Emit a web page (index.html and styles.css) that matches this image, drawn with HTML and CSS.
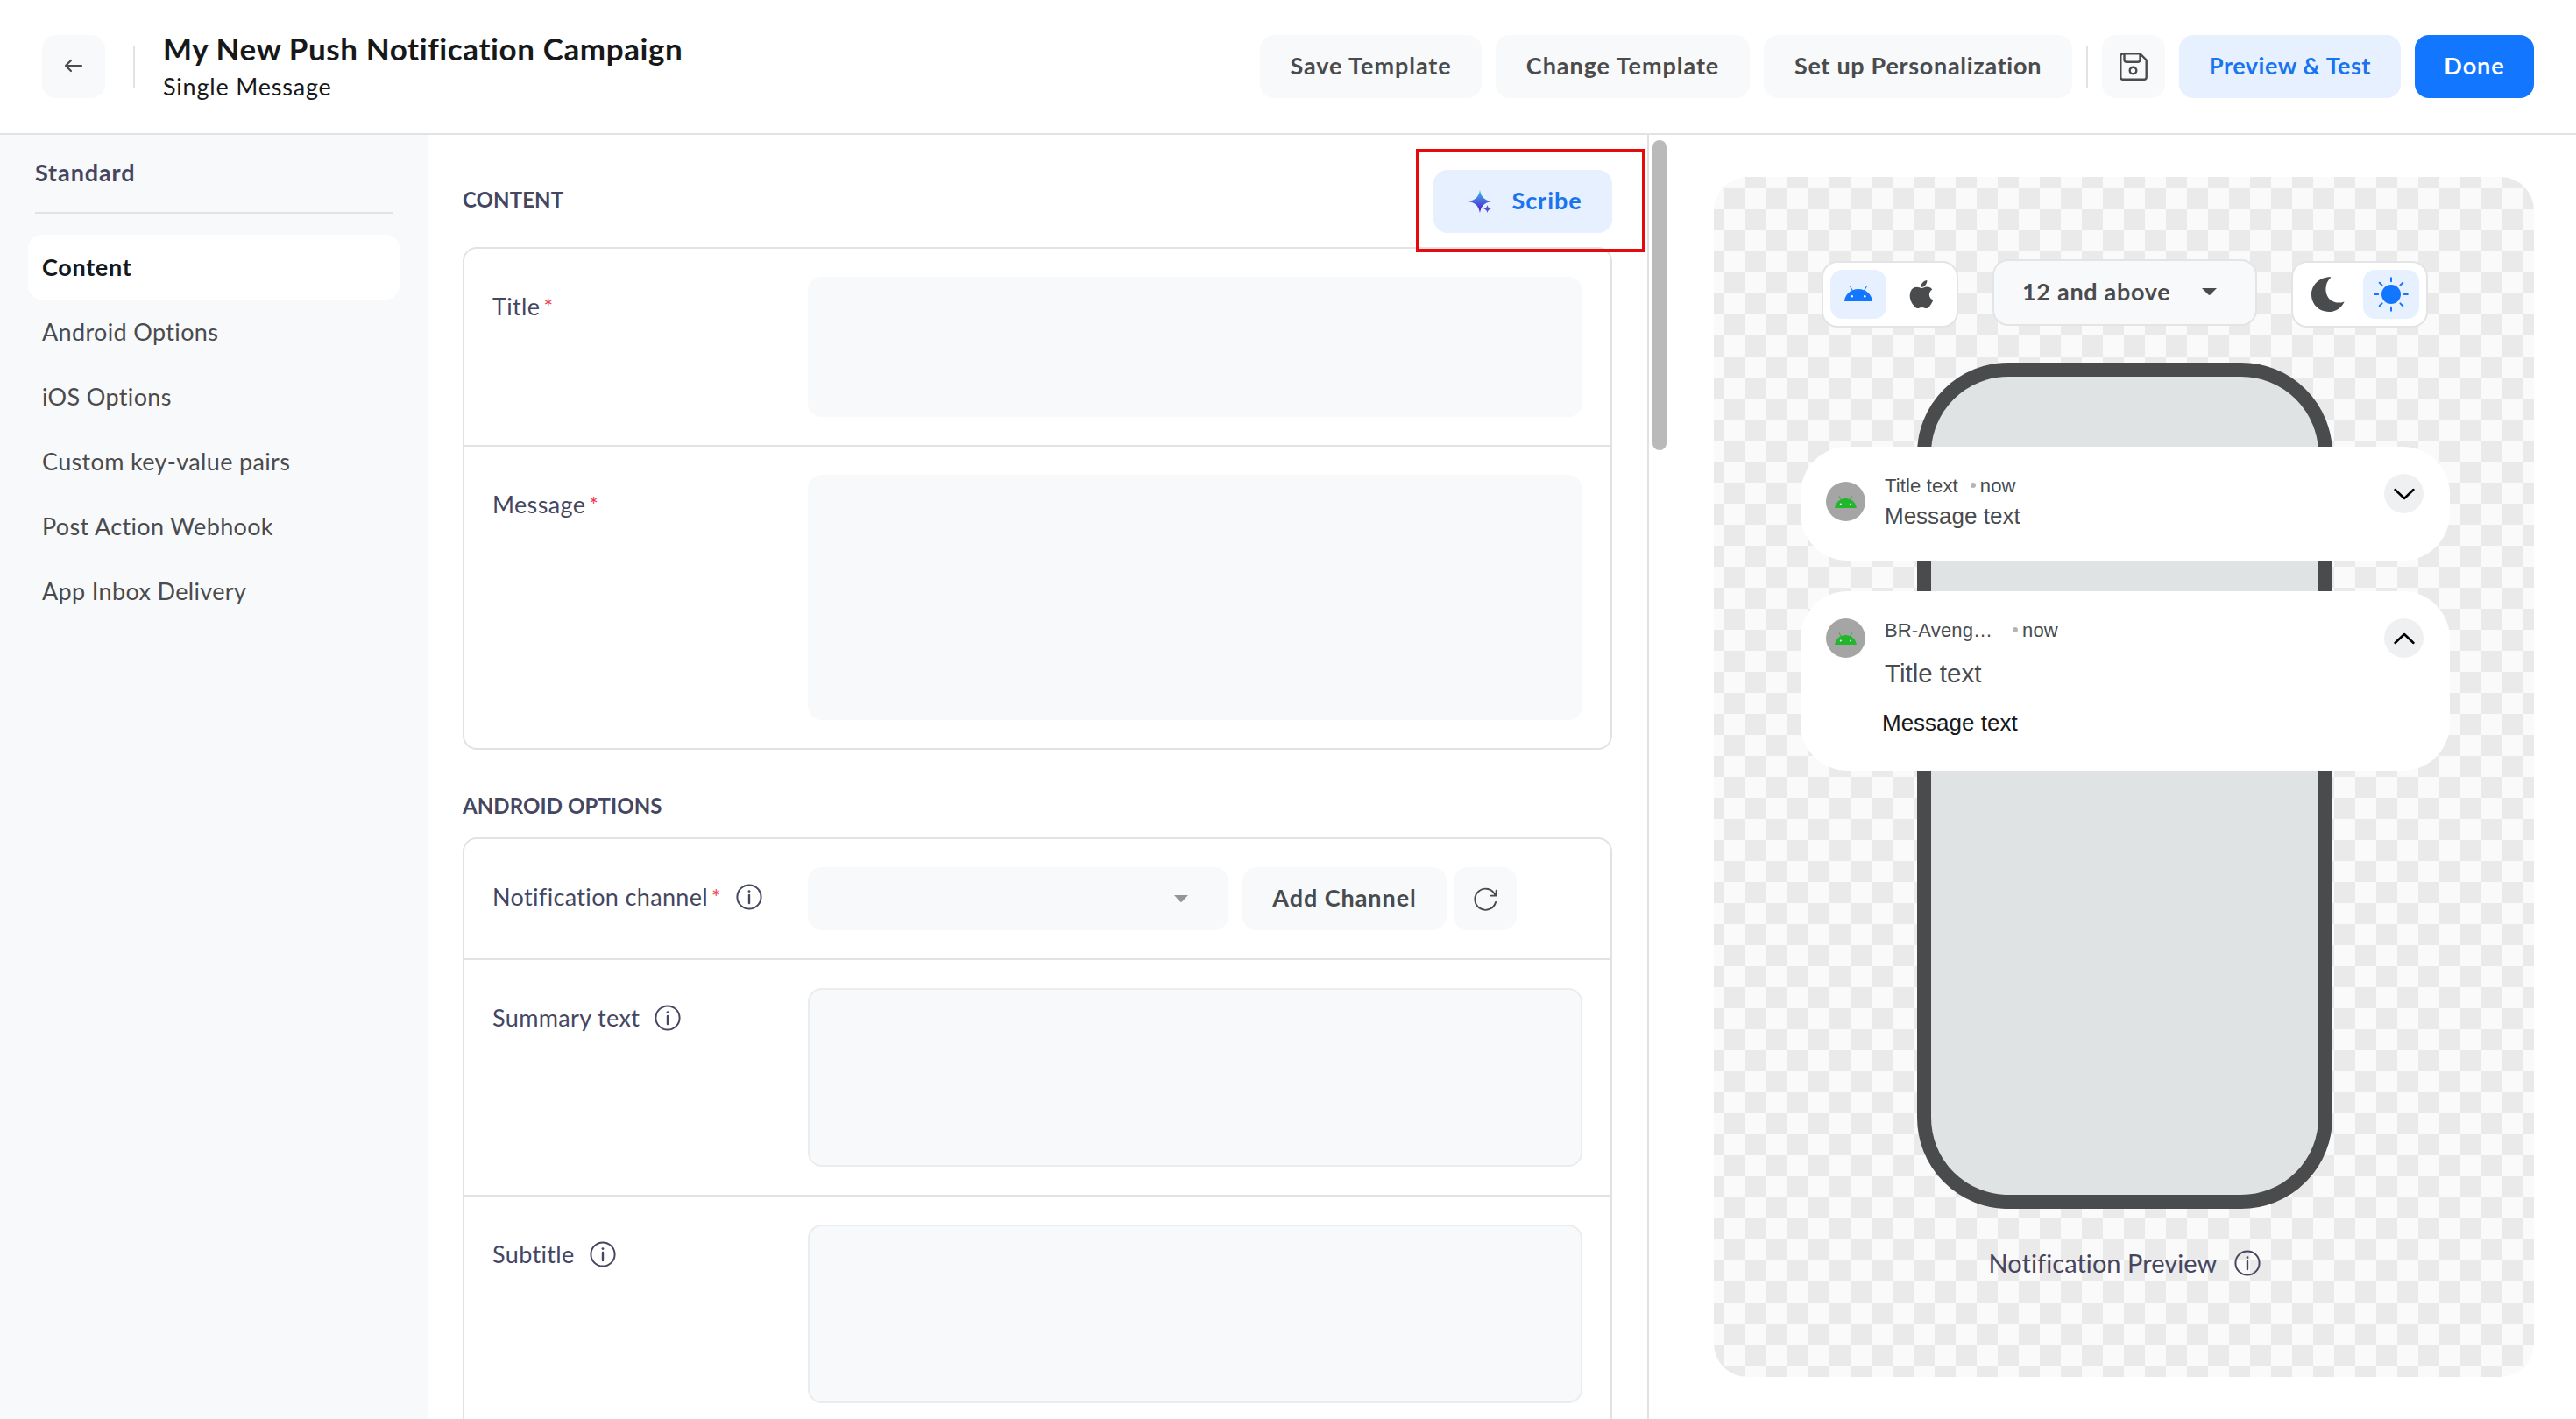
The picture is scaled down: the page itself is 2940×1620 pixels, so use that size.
FILE: index.html
```html
<!DOCTYPE html>
<html lang="en">

<head>
    <meta charset="UTF-8">
    <meta name="viewport" content="width=device-width, initial-scale=1.0">
    <title>My New Push Notification Campaign</title>
    <link rel="stylesheet" href="styles.css">
</head>

<body>
    <!-- shared icons -->
    <svg class="icon-defs" width="0" height="0">
        <symbol id="info" viewBox="0 0 30 30">
            <circle cx="15" cy="15" r="13.6" fill="none" stroke="currentColor" stroke-width="2" />
            <circle cx="15" cy="8.6" r="1.4" fill="currentColor" />
            <path d="M15 13v9" stroke="currentColor" stroke-width="2.4" stroke-linecap="round" />
        </symbol>
        <symbol id="android" viewBox="0 0 32 18">
            <path d="M0 18C0.6 12.6 3.9 8 8.7 5.6L6 0.9 6.9 0.4 9.7 5.2C13.6 3.5 18.4 3.5 22.3 5.2L25.1 0.4 26 0.9 23.3 5.6C28.1 8 31.4 12.6 32 18Z" fill="currentColor" />
            <circle class="eye" cx="8.7" cy="12.2" r="1.3" />
            <circle class="eye" cx="23.3" cy="12.2" r="1.3" />
        </symbol>
    </svg>

    <header class="header">
        <button class="btn icon-btn">
            <svg width="24" height="20" viewBox="0 0 24 20" fill="none" stroke="currentColor" stroke-width="2.2" stroke-linecap="round" stroke-linejoin="round">
                <path d="M21 9H3M9 3L3 9l6 6" />
            </svg>
        </button>
        <div class="divider divider-left"></div>
        <div class="campaign">
            <h1>My New Push Notification Campaign</h1>
            <p>Single Message</p>
        </div>
        <div class="actions">
            <button class="btn save-template">Save Template</button>
            <button class="btn change-template">Change Template</button>
            <button class="btn personalize">Set up Personalization</button>
            <div class="divider"></div>
            <button class="btn icon-btn">
                <svg width="32" height="32" viewBox="0 0 32 32" fill="none" stroke="currentColor" stroke-width="2.4" stroke-linejoin="round">
                    <path d="M4 1.3h19.5l7.2 7.2V28a2.7 2.7 0 0 1-2.7 2.7H4A2.7 2.7 0 0 1 1.3 28V4A2.7 2.7 0 0 1 4 1.3z" />
                    <path d="M5.5 1.5V8a2.8 2.8 0 0 0 2.8 2.8h12.4A2.8 2.8 0 0 0 23.5 8V1.5" />
                    <circle cx="15.5" cy="20.5" r="3.8" />
                </svg>
            </button>
            <button class="btn btn-light preview-test">Preview &amp; Test</button>
            <button class="btn btn-primary done">Done</button>
        </div>
    </header>

    <div class="layout">
        <nav class="sidebar">
            <h2>Standard</h2>
            <a class="nav-item active">Content</a>
            <a class="nav-item">Android Options</a>
            <a class="nav-item">iOS Options</a>
            <a class="nav-item">Custom key-value pairs</a>
            <a class="nav-item">Post Action Webhook</a>
            <a class="nav-item">App Inbox Delivery</a>
        </nav>

        <main class="editor">
            <div class="section-head">
                <h3>CONTENT</h3>
                <div class="scribe-wrap">
                    <button class="btn btn-light scribe">
                        <svg width="28" height="28" viewBox="0 0 28 28">
                            <defs>
                                <linearGradient id="spark" x1="0" y1="0" x2="0" y2="1">
                                    <stop offset="0" stop-color="#35c3ea" />
                                    <stop offset="0.5" stop-color="#4a63dc" />
                                    <stop offset="1" stop-color="#4a14d0" />
                                </linearGradient>
                            </defs>
                            <path d="M14 1c1.6 8 5 11.400 13 13-8 1.600-11.400 5-13 13-1.600-8-5-11.400-13-13 8-1.600 11.400-5 13-13z" fill="url(#spark)" />
                            <path d="M22.5 18c.6 2.800 1.700 3.900 4.500 4.500-2.800.6-3.900 1.700-4.500 4.500-.6-2.800-1.700-3.900-4.500-4.500 2.800-.6 3.900-1.700 4.500-4.500z" fill="#4f55cf" stroke="#e6f0ff" stroke-width="1" paint-order="stroke" />
                        </svg>
                        <span>Scribe</span>
                    </button>
                    <div class="highlight"></div>
                </div>
            </div>

            <section class="card">
                <div class="row">
                    <label>Title<sup>*</sup></label>
                    <div class="field title-field"></div>
                </div>
                <div class="row">
                    <label>Message<sup>*</sup></label>
                    <div class="field message-field"></div>
                </div>
            </section>

            <h3 class="android-heading">ANDROID OPTIONS</h3>

            <section class="card">
                <div class="row">
                    <label>Notification channel<sup>*</sup> <svg class="info"><use href="#info" /></svg></label>
                    <div class="select">
                        <svg width="16" height="8" viewBox="0 0 16 8"><path d="M0 0h16L9 7.5q-1 .8-2 0z" fill="#949596" /></svg>
                    </div>
                    <button class="btn add-channel">Add Channel</button>
                    <button class="btn icon-btn">
                        <svg width="27" height="27" viewBox="0 0 28 28" fill="none" stroke="currentColor" stroke-width="2" stroke-linecap="round" stroke-linejoin="round">
                            <path d="M26 17.5A12.5 12.5 0 1 1 25.5 9.5M26.6 3.8V10h-6" />
                        </svg>
                    </button>
                </div>
                <div class="row">
                    <label>Summary text <svg class="info"><use href="#info" /></svg></label>
                    <div class="field outlined"></div>
                </div>
                <div class="row">
                    <label>Subtitle <svg class="info"><use href="#info" /></svg></label>
                    <div class="field outlined"></div>
                </div>
            </section>
        </main>

        <div class="scroll-track">
            <div class="scroll-thumb"></div>
        </div>

        <aside class="preview">
            <div class="toolbar">
                <div class="toggle">
                    <div class="toggle-item on">
                        <svg class="android-icon" width="32" height="18"><use href="#android" /></svg>
                    </div>
                    <div class="toggle-item">
                        <svg width="28" height="32" viewBox="0 0 28 32" fill="currentColor">
                            <path d="M20.3 0c.3 2-.6 4-1.800 5.400-1.200 1.400-3 2.400-4.800 2.300-.3-1.900.6-3.900 1.700-5.200C16.6 1.100 18.600.1 20.300 0z" />
                            <path d="M14.4 8.900c1.500 0 3.300-1.500 6-1.400 2.600.1 4.600 1.200 5.900 3-5 3.200-4.300 9.900 1 12-.8 2.300-2.200 4.800-3.900 6.900-1.200 1.500-2.300 2.600-4 2.600-1.800 0-2.600-1.100-4.900-1.100s-3.100 1.100-4.900 1.100c-1.800 0-3.100-1.400-4.300-3C1.900 24.900.1 20 .9 15.400 1.700 10.500 4.800 7.700 8.200 7.700c2.600 0 4.300 1.200 6.200 1.200z" />
                        </svg>
                    </div>
                </div>
                <div class="version">
                    <span>12 and above</span>
                    <svg width="17" height="8" viewBox="0 0 17 8"><path d="M0 0h17L9.5 7.5q-1 .8-2 0z" fill="#4a4b4d" /></svg>
                </div>
                <div class="toggle">
                    <div class="toggle-item moon">
                        <svg width="40" height="40" viewBox="0 0 40 40" fill="currentColor">
                            <path d="M23.500.5C17 6 16.200 15 19 21.500c3 6.800 11 10 19.600 6.900C35.500 35.300 28.600 40 21 40 10 40 1 31.500 1 20.300 1 9.300 10 .200 22.500.200z" />
                        </svg>
                    </div>
                    <div class="toggle-item on">
                        <svg width="40" height="40" viewBox="0 0 40 40" fill="currentColor" stroke="currentColor" stroke-width="2" stroke-linecap="round">
                            <circle cx="20" cy="20" r="10" />
                            <path d="M20 1.2v4M20 34.8v4M1.2 20h4M34.8 20h4M6.7 6.7l2.900 2.900M30.4 30.4l2.900 2.900M6.7 33.3l2.900-2.900M30.4 9.6l2.900-2.900" />
                        </svg>
                    </div>
                </div>
            </div>

            <div class="phone">
                <!-- notifications are wider than the phone and lie over it -->
                <div class="notification collapsed">
                    <div class="avatar"><svg width="25" height="14"><use href="#android" /></svg></div>
                    <div class="notification-body">
                        <div class="meta"><span>Title text</span><i></i><span>now</span></div>
                        <p class="message">Message text</p>
                    </div>
                    <div class="chevron">
                        <svg width="26" height="14" viewBox="0 0 26 14" fill="none" stroke="#000" stroke-width="2.5" stroke-linecap="round" stroke-linejoin="round"><path d="M2.5 2L13 12 23.5 2" /></svg>
                    </div>
                </div>
                <div class="notification expanded">
                    <div class="avatar"><svg width="25" height="14"><use href="#android" /></svg></div>
                    <div class="notification-body">
                        <div class="meta"><span class="app-name">BR-Aveng…</span><i></i><span>now</span></div>
                        <p class="big-title">Title text</p>
                        <p class="message">Message text</p>
                    </div>
                    <div class="chevron">
                        <svg width="26" height="14" viewBox="0 0 26 14" fill="none" stroke="#000" stroke-width="2.5" stroke-linecap="round" stroke-linejoin="round"><path d="M2.5 12L13 2l10.5 10" /></svg>
                    </div>
                </div>
            </div>

            <div class="caption">Notification Preview <svg class="info"><use href="#info" /></svg></div>
        </aside>
    </div>
</body>

</html>
```
FILE: styles.css
```css
* {
    box-sizing: border-box;
}

body {
    margin: 0;
    height: 1620px;
    overflow: hidden;
    font-family: Lato, "Open Sans", sans-serif;
    font-size: 27px;
    letter-spacing: 0.35px;
    color: #4a4b4d;
    background-color: #fff;
}

h1,
h2,
h3,
p {
    margin: 0;
}

svg {
    display: block;
    flex: none;
}

.icon-defs {
    position: absolute;
}

/* buttons */
.btn {
    display: flex;
    justify-content: center;
    align-items: center;
    flex: none;
    height: 72px;
    padding: 0 0 3px;
    border: none;
    border-radius: 16px;
    background-color: #f8f9fb;
    color: #4a4b4d;
    font-family: inherit;
    font-size: 27px;
    font-weight: bold;
    letter-spacing: 0.95px;
    white-space: nowrap;
}

.icon-btn {
    width: 72px;
    padding: 0;
}

.btn-light {
    background-color: #e6f0ff;
    color: #1a74f0;
}

.btn-primary {
    background-color: #1276ff;
    color: #fff;
}

/* header */
.header {
    display: flex;
    align-items: flex-start;
    height: 154px;
    padding: 40px 48px 0;
    border-bottom: 2px solid #e0e3e5;
}

.divider {
    width: 2px;
    height: 48px;
    margin-top: 12px;
    background-color: #e0e3e5;
}

.divider-left {
    margin-left: 32px;
}

.campaign {
    margin: -7px 0 0 32px;
    color: #17181a;
    white-space: nowrap;
}

.campaign h1 {
    font-size: 35px;
    letter-spacing: 0.6px;
    line-height: 44px;
}

.campaign p {
    margin-top: 4px;
    letter-spacing: 0.8px;
    line-height: 36px;
}

.actions {
    display: flex;
    gap: 16px;
    margin-left: auto;
}

.save-template {
    width: 253px;
}

.change-template {
    width: 290px;
}

.personalize {
    width: 352px;
    letter-spacing: 0.7px;
}

.preview-test {
    width: 253px;
    letter-spacing: 0.5px;
}

.done {
    width: 136px;
}

/* page body */
.layout {
    display: flex;
    height: 1466px;
}

.sidebar {
    width: 488px;
    padding: 24px 32px 0;
    background-color: #f8f9fb;
}

.sidebar h2 {
    height: 66px;
    margin: 0 8px 24px;
    border-bottom: 2px solid #e0e3e5;
    color: #45465f;
    font-size: 27px;
    letter-spacing: 0.9px;
    line-height: 38px;
}

.nav-item {
    display: flex;
    align-items: center;
    height: 74px;
    padding: 0 16px 2px;
    border-radius: 16px;
}

.nav-item.active {
    background-color: #fff;
    color: #17181a;
    font-weight: bold;
    letter-spacing: 0.7px;
}

.editor {
    width: 1394px;
    padding: 40px 40px 0;
    border-right: 2px solid #dfe2e3;
}

.editor h3 {
    color: #45465f;
    font-size: 24px;
    letter-spacing: 0.1px;
    line-height: 36px;
}

.section-head {
    display: flex;
    justify-content: space-between;
    height: 88px;
}

.section-head h3 {
    padding-top: 16px;
}

.scribe-wrap {
    position: relative;
}

.scribe {
    width: 204px;
    gap: 22px;
    padding-left: 5px;
}

.scribe svg {
    margin-top: 3px;
}

/* red frame around the Scribe button */
.highlight {
    position: absolute;
    left: -20px;
    top: -24px;
    width: 262px;
    height: 118px;
    border: 4px solid #e60a0c;
}

.card {
    border: 2px solid #e0e3e5;
    border-radius: 16px;
}

.row {
    display: flex;
    padding: 32px;
}

.row + .row {
    border-top: 2px solid #e0e3e5;
}

.row label {
    display: flex;
    align-items: center;
    width: 360px;
    height: 36px;
    margin-top: 16px;
    color: #45465f;
    line-height: 38px;
}

sup {
    align-self: flex-start;
    margin-left: 4px;
    color: #f0394e;
    font-size: 25px;
    line-height: 36px;
    letter-spacing: 0;
}

.info {
    width: 30px;
    height: 30px;
    margin-left: 17px;
}

.field {
    flex: 1;
    height: 204px;
    border-radius: 16px;
    background-color: #f8f9fb;
}

.title-field {
    height: 160px;
}

.message-field {
    height: 280px;
}

.outlined {
    border: 2px solid #ebecee;
}

.android-heading {
    margin: 46px 0 18px;
}

.select {
    display: flex;
    justify-content: flex-end;
    align-items: center;
    width: 480px;
    height: 72px;
    padding-right: 46px;
    border-radius: 16px;
    background-color: #f8f9fb;
}

.add-channel {
    width: 233px;
    margin: 0 8px 0 16px;
}

.scroll-track {
    width: 24px;
    padding: 6px 4px;
}

.scroll-thumb {
    width: 16px;
    height: 354px;
    border-radius: 8px;
    background-color: #bababa;
}

/* preview */
.preview {
    display: flex;
    flex-direction: column;
    align-items: center;
    width: 936px;
    height: 1370px;
    margin: 48px 0 0 50px;
    padding: 94px 0 0 2px;
    border-radius: 38px;
    background: repeating-conic-gradient(#eaeaea 0 25%, #fafafa 0 50%) center / 48px 48px;
}

.toolbar {
    display: flex;
    gap: 39px;
}

.toggle {
    display: flex;
    gap: 8px;
    width: 156px;
    height: 76px;
    margin-top: 2px;
    padding: 8px;
    border: 2px solid #e2e4e6;
    border-radius: 18px;
    background-color: #fff;
}

.toggle-item {
    display: flex;
    justify-content: center;
    align-items: center;
    flex: none;
    width: 64px;
    height: 56px;
    border-radius: 14px;
}

.toggle-item.on {
    background-color: #e6f0ff;
    color: #1276ff;
}

.android-icon {
    margin-bottom: 2px;
}

.eye {
    fill: #fff;
}

.avatar .eye {
    fill: #a5a5a5;
}

.version {
    display: flex;
    align-items: center;
    justify-content: space-between;
    width: 302px;
    height: 76px;
    padding: 0 44px 3px 32px;
    border: 2px solid #e2e4e6;
    border-radius: 18px;
    background-color: #f8f9fb;
    font-weight: bold;
    letter-spacing: 0.7px;
}

.phone {
    position: relative;
    width: 474px;
    height: 966px;
    margin-top: 40px;
    border: 16px solid #4a4b4d;
    border-radius: 104px;
    background-color: #dfe3e4;
}

.notification {
    position: absolute;
    left: -149px;
    display: flex;
    width: 741px;
    padding: 31px 30px 0 29px;
    border-radius: 54px;
    background-color: #fff;
    font-family: "Liberation Sans", Arial, sans-serif;
    letter-spacing: 0;
}

.collapsed {
    top: 80px;
    height: 130px;
}

.expanded {
    top: 245px;
    height: 205px;
}

.avatar,
.chevron {
    display: flex;
    justify-content: center;
    align-items: center;
    width: 45px;
    height: 45px;
    border-radius: 50%;
}

.avatar {
    background-color: #a5a5a5;
    color: #21b62c;
}

.collapsed .avatar {
    margin-top: 9px;
}

.chevron {
    background-color: #eff0f2;
}

.notification-body {
    flex: 1;
    margin-left: 22px;
}

.meta {
    display: flex;
    align-items: center;
    font-size: 22px;
    letter-spacing: 0.15px;
    line-height: 28px;
}

.meta i {
    width: 6px;
    height: 6px;
    margin: 0 5px 2px 14px;
    border-radius: 50%;
    background-color: #b5b5b5;
}

.app-name {
    width: 132px;
}

.message {
    margin-top: 4px;
    font-size: 26px;
    line-height: 32px;
}

.big-title {
    margin-top: 17px;
    font-size: 29.5px;
    line-height: 36px;
}

.expanded .message {
    margin: 22px 0 0 -3px;
    color: #17181a;
}

.caption {
    display: flex;
    align-items: center;
    margin-top: 44px;
    color: #45465f;
    font-size: 29px;
    letter-spacing: 0.05px;
    line-height: 36px;
}

.caption .info {
    margin-left: 20px;
}
```
